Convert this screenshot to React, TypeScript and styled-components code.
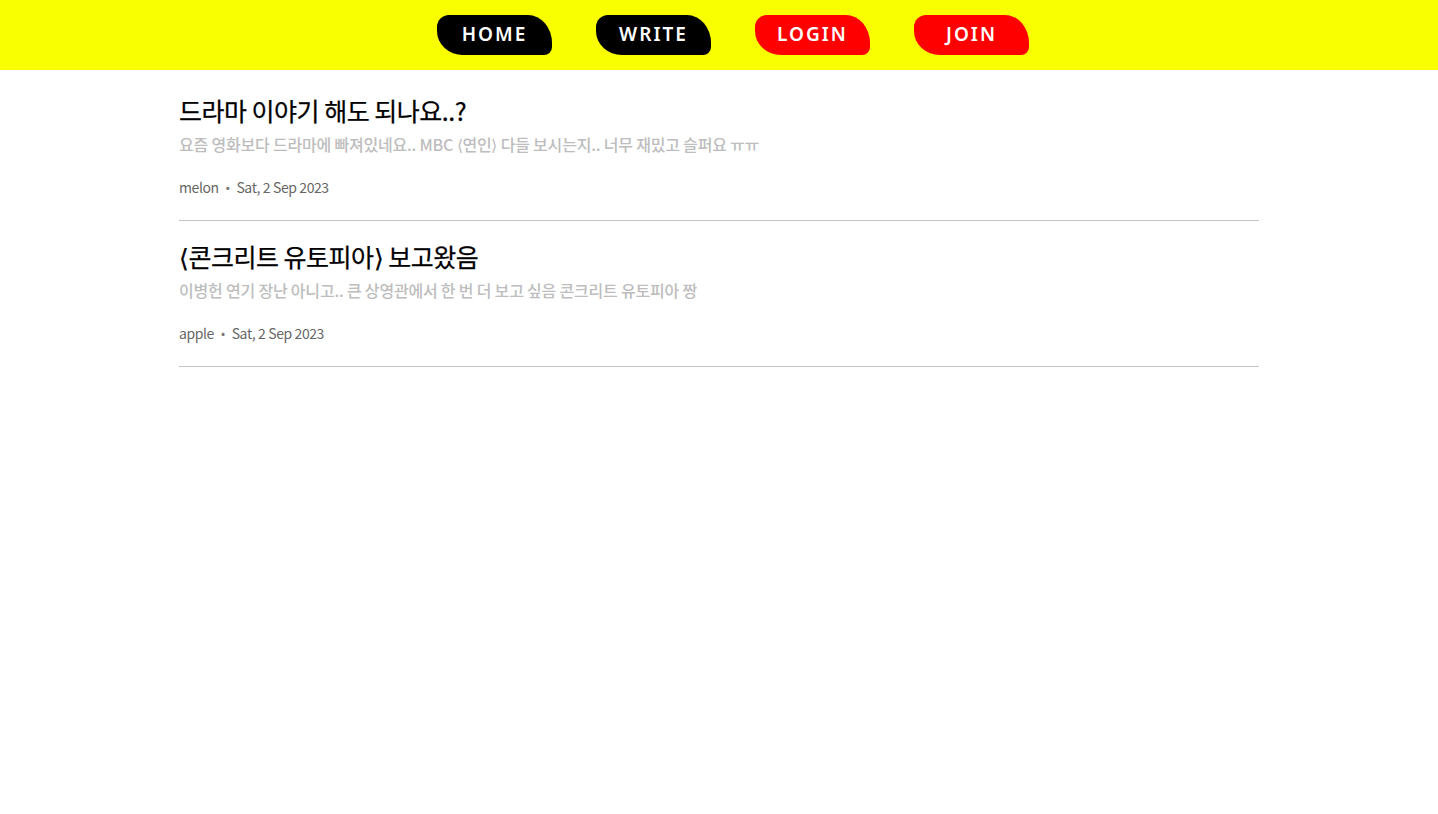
import React from "react";
import styled, { createGlobalStyle } from "styled-components";

const GlobalStyle = createGlobalStyle`
  * { box-sizing: border-box; }
  body {
    margin: 0;
    background: #ffffff;
    font-family: "Noto Sans CJK KR", "Noto Sans", sans-serif;
  }
`;

const Header = styled.header`
  height: 70px;
  background: #faff00;
  display: flex;
  justify-content: center;
  align-items: center;
  gap: 44px;
  padding-left: 28px;
`;

const NavButton = styled.a<{ $accent?: boolean }>`
  width: 115px;
  height: 40px;
  display: flex;
  align-items: center;
  justify-content: center;
  background: ${(p) => (p.$accent ? "#ff0000" : "#000000")};
  color: #ffffff;
  border-radius: 12px 24px 8px 26px / 12px 28px 8px 24px;
  font-family: "Noto Sans", "Open Sans", sans-serif;
  font-weight: 600;
  font-size: 19px;
  letter-spacing: 2px;
  text-decoration: none;
  padding-bottom: 3px;
`;

const List = styled.main`
  max-width: 1080px;
  margin: 5px auto 0;
`;

const Post = styled.article`
  padding: 18px 0 23px;
  border-bottom: 1px solid #c4c4c4;
`;

const Title = styled.h2`
  margin: 0 0 6px;
  font-size: 25px;
  font-weight: 400;
  letter-spacing: -0.5px;
  color: #000;
  line-height: 34px;
  -webkit-text-stroke: 0.25px #000;
`;

const Desc = styled.p`
  margin: 0;
  font-size: 16px;
  font-weight: 500;
  letter-spacing: -0.2px;
  color: #bdbdbd;
  line-height: 22px;
`;

const Meta = styled.div`
  margin-top: 22px;
  display: flex;
  align-items: center;
  gap: 7px;
  font-size: 14px;
  color: #666;
  letter-spacing: -0.4px;
  line-height: 20px;
`;

const Dot = styled.span`
  font-size: 12px;
  color: #777;
`;

const posts = [
  {
    title: "드라마 이야기 해도 되나요..?",
    desc: "요즘 영화보다 드라마에 빠져있네요.. MBC ⟨연인⟩ 다들 보시는지.. 너무 재밌고 슬퍼요 ㅠㅠ",
    author: "melon",
    date: "Sat, 2 Sep 2023",
  },
  {
    title: "⟨콘크리트 유토피아⟩ 보고왔음",
    desc: "이병헌 연기 장난 아니고.. 큰 상영관에서 한 번 더 보고 싶음 콘크리트 유토피아 짱",
    author: "apple",
    date: "Sat, 2 Sep 2023",
  },
];

export default function App() {
  return (
    <>
      <GlobalStyle />
      <Header>
        <NavButton href="#">HOME</NavButton>
        <NavButton href="#">WRITE</NavButton>
        <NavButton href="#" $accent>LOGIN</NavButton>
        <NavButton href="#" $accent>JOIN</NavButton>
      </Header>
      <List>
        {posts.map((p) => (
          <Post key={p.title}>
            <Title>{p.title}</Title>
            <Desc>{p.desc}</Desc>
            <Meta>
              <span>{p.author}</span>
              <Dot>•</Dot>
              <span>{p.date}</span>
            </Meta>
          </Post>
        ))}
      </List>
    </>
  );
}
